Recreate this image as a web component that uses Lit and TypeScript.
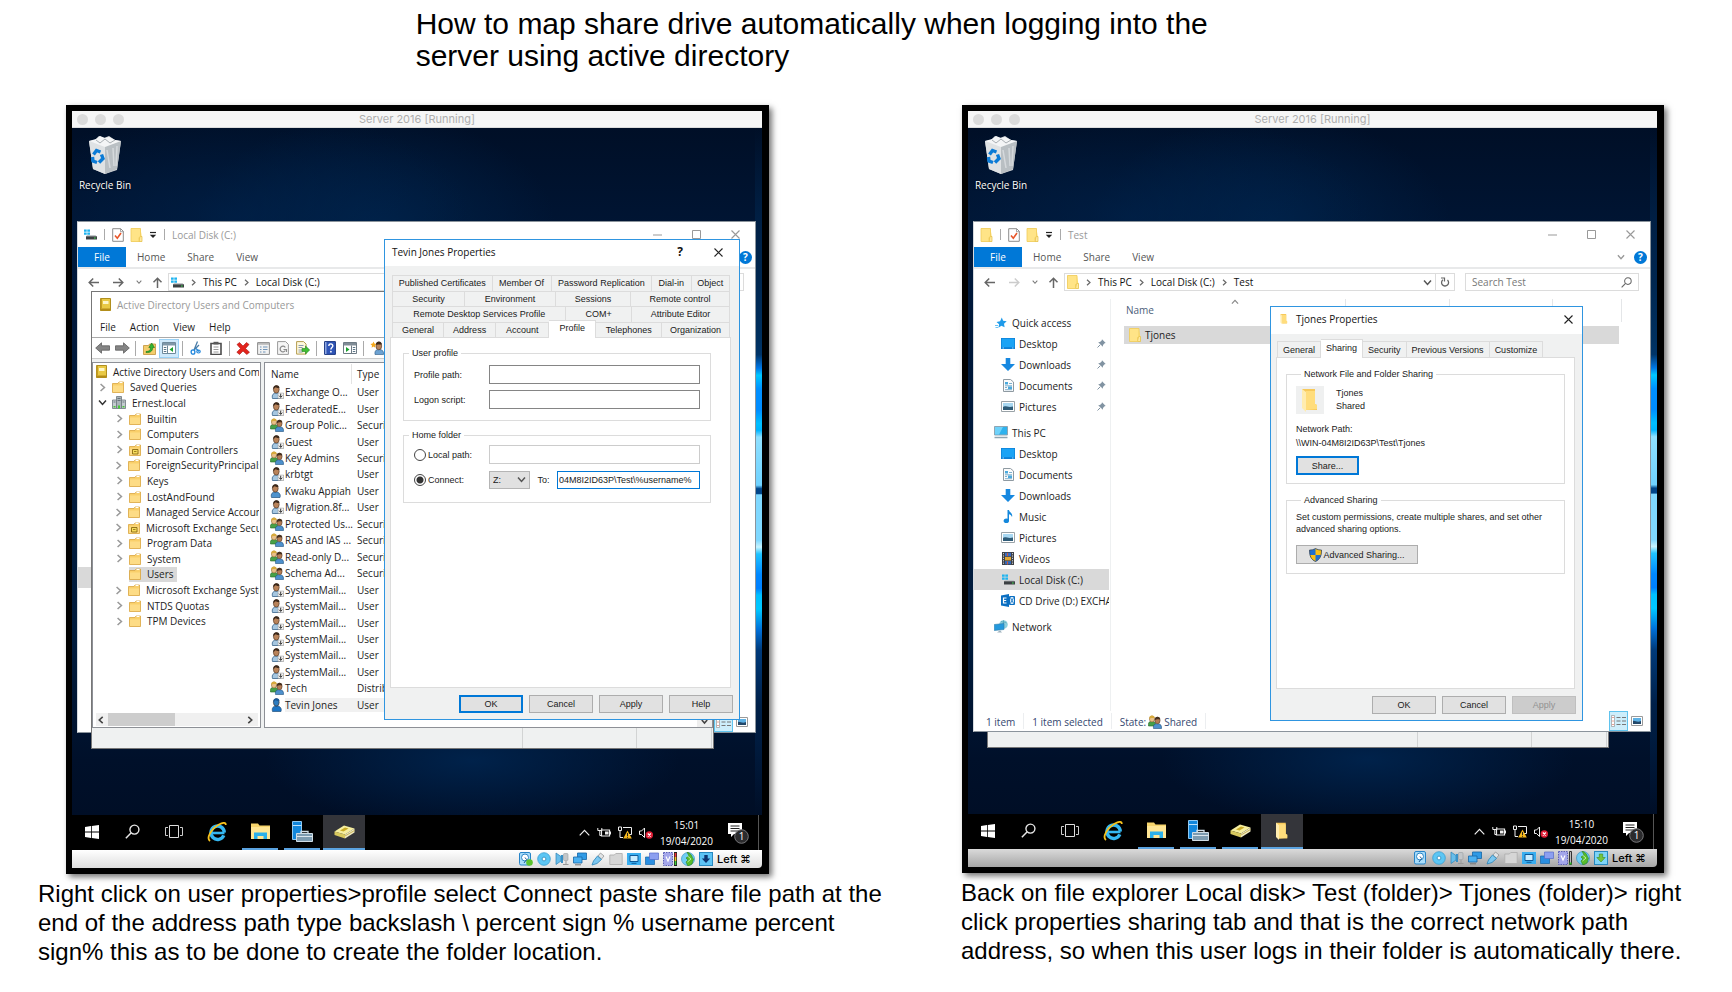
import { LitElement, html, css, nothing } from "lit";
import type { TemplateResult } from "lit";
import { customElement, property } from "lit/decorators.js";
import { classMap } from "lit/directives/class-map.js";

/* ---------- icons ---------- */

const folder = (w = 12, h = 14) => html`<svg width=${w} height=${h} viewBox="0 0 12 14" aria-hidden="true"><path d="M.5.5h9.5l1.5 9v4H.5z" fill="#ffe27a"/><path d="M9.5 8.5h2v5h-3z" fill="#ffe9a0" stroke="#e3bd44" stroke-width=".7"/><path d="M.5.5h9.5v8l-1.500 1v4h-8z" fill="#ffe487" stroke="#f0cc5a" stroke-width=".8"/></svg>`;

const openFolder = (w = 18, h = 24) => html`<svg width=${w} height=${h} viewBox="0 0 18 24" aria-hidden="true"><path d="M1 1h13v15l2 1v5H5z" fill="#f7c95a"/><path d="M5 3h9v13l2 1v4l-11 1z" fill="#ffdd7c"/><path d="M1 1l4 3v20l-4-4z" fill="#ffecaf"/></svg>`;

const treeFolder = (badge = false) => html`<svg width="12" height="12" viewBox="0 0 12 12" aria-hidden="true"><path d="M.5 2.500h5.500l1-1.500h4.500v10.500H.5z" fill="#f9cf6a" stroke="#d9a640" stroke-width=".8"/><path d="M1 4.500h10v6.500H1z" fill="#fddc86"/><path d="M7.500 1.500h3" stroke="#fff" stroke-width="1"/>${badge ? html`<svg x="3" y="4" width="7" height="7"><path d="M.5 1.500h5.500v4.500H.5z" fill="#f6dc5c" stroke="#8a6a10" stroke-width=".9"/><path d="M2 3.500h2.500" stroke="#8a6a10" stroke-width=".8"/></svg>` : nothing}</svg>`;

const drive = html`<svg width="13" height="11" viewBox="0 0 13 11" aria-hidden="true"><path d="M0 .5h2.700v2.300H0zM3.300.5H6v2.300H3.300zM0 3.400h2.700v2.300H0zM3.300 3.400H6v2.300H3.300z" fill="#1fb4f0"/><path d="M3 6h8.500l1.200 1.500H2z" fill="#c3c7ca"/><path d="M2 7.300h11v3.200H2z" fill="#3c4043"/><path d="M10 8.500h1.700v1H10z" fill="#3fdc50"/></svg>`;

const checkDoc = html`<svg width="12" height="14" viewBox="0 0 12 14" aria-hidden="true"><path d="M.7.7h8l2.600 2.600v10H.7z" fill="#fff" stroke="#8d8d8d"/><path d="M8.500.7v3h3" fill="none" stroke="#8d8d8d" stroke-width=".8"/><path d="M3 7.500l2.300 2.700L9 5" fill="none" stroke="#e8562a" stroke-width="1.600"/></svg>`;

const dropMark = html`<svg width="8" height="8" viewBox="0 0 8 8" aria-hidden="true"><path d="M1 1.500h6" stroke="#222" stroke-width="1.200"/><path d="M.8 3.800h6.400L4 7z" fill="#222"/></svg>`;

const arrow = (dir: "left" | "right" | "up", color = "#666") => {
  const d = { left: "M11 5.500H1.200M5.200 1.500l-4 4 4 4", right: "M0 5.500h9.800M5.800 1.500l4 4-4 4", up: "M5.500 11V1.200M1.500 5.200l4-4 4 4" }[dir];
  return html`<svg width="11" height="11" viewBox="0 0 11 11" aria-hidden="true"><path d=${d} fill="none" stroke=${color} stroke-width="1.500"/></svg>`;
};

const chevron = (dir: "left" | "right" | "up" | "down", color = "#777", size = 7, weight = 1.2) => {
  const d = { left: "M5 .8L2 3.500l3 2.700", right: "M2 .8l3 2.700-3 2.700", up: "M.8 5l2.700-3 2.700 3", down: "M.8 2l2.700 3 2.700-3" }[dir];
  return html`<svg width=${size} height=${size} viewBox="0 0 7 7" aria-hidden="true"><path d=${d} fill="none" stroke=${color} stroke-width=${weight}/></svg>`;
};

const closeX = (color = "#222", size = 9) => html`<svg width=${size} height=${size} viewBox="0 0 9 9" aria-hidden="true"><path d="M.5.5l8 8M8.500.5l-8 8" stroke=${color} stroke-width="1.100"/></svg>`;
const minimize = html`<svg width="9" height="9" viewBox="0 0 9 9" aria-hidden="true"><path d="M0 5h9" stroke="#999"/></svg>`;
const maximize = html`<svg width="9" height="9" viewBox="0 0 9 9" aria-hidden="true"><path d="M.5.5h8v8h-8z" fill="none" stroke="#999"/></svg>`;
const refresh = html`<svg width="10" height="11" viewBox="0 0 10 11" aria-hidden="true"><path d="M7.500 3A3.500 3.500 0 1 1 3 2.700" fill="none" stroke="#666" stroke-width="1.300"/><path d="M1 1h3.500v3.500" fill="none" stroke="#666" stroke-width="1.200"/></svg>`;
const magnifier = (color = "#666", size = 11) => html`<svg width=${size} height=${size} viewBox="0 0 14 14" aria-hidden="true"><circle cx="8.800" cy="5.200" r="4.200" fill="none" stroke=${color} stroke-width="1.300"/><path d="M5.800 8.200L.8 13.300" stroke=${color} stroke-width="1.400"/></svg>`;

const book = html`<svg width="11" height="13" viewBox="0 0 11 13" aria-hidden="true"><path d="M.5.500h10v12H.5z" fill="#e9c945" stroke="#a88410" stroke-width=".9"/><path d="M3 3h5.500v3H3z" fill="#fdf6c9"/><path d="M.5 10.500h10v2H.5z" fill="#b48c18"/><path d="M.6 1h1.400v9.500H.6z" fill="#c59e22"/></svg>`;

const domain = html`<svg width="14" height="13" viewBox="0 0 14 13" aria-hidden="true"><path d="M4.500.5h5v12h-5z" fill="#aab4ba" stroke="#6c777d" stroke-width=".8"/><path d="M.5 4h4v8.500h-4zM9.500 4h4v8.500h-4z" fill="#c4ccd0" stroke="#6c777d" stroke-width=".8"/><path d="M5.500 2.500h3M5.500 4.500h3M1.500 6h2M10.500 6h2" stroke="#58646b" stroke-width=".8"/><path d="M6 9.500h2v3H6zM1.500 10h2v1.500h-2zM10.500 10h2v1.500h-2z" fill="#48c838"/></svg>`;

const userIcon = (disabled: boolean, bright = false) => html`<svg width="13" height="14" viewBox="0 0 13 14" aria-hidden="true"><path d="M1.500 13.500c-1-4 1-5.500 4.200-5.500s5.300 2 4.300 5.500z" fill=${bright ? "#1c74c4" : disabled ? "#a5c6e0" : "#4f93cd"} stroke="#24527c" stroke-width=".7"/><ellipse cx="5.300" cy="4.400" rx="2.900" ry="3.700" fill=${bright ? "#2d7cc0" : "#b9835a"} stroke="#4a2f1c" stroke-width=".6"/><path d="M2.300 4.500C2 1.500 3.500.300 5.500.300s3 1.400 2.900 2.700c-2 .3-3-.5-3.600-.7-.8.500-1.600.9-2.500 2.200z" fill=${bright ? "#1a5896" : "#3b281b"}/>${disabled ? html`<svg x="6.500" y="7.500" width="6.500" height="6.500" viewBox="0 0 6.500 6.500"><path d="M.4.400h5.700v5.700H.4z" fill="#f4f4f4" stroke="#888" stroke-width=".6"/><path d="M3.200 1.200v3.500M1.600 3.200l1.600 1.700 1.600-1.700" fill="none" stroke="#222" stroke-width=".9"/></svg>` : nothing}</svg>`;

const groupIcon = html`<svg width="14" height="14" viewBox="0 0 14 14" aria-hidden="true"><path d="M.5 11c-.5-4 1-4.500 3.500-4.500s4 1 4 4.500z" fill="#46a048" stroke="#246427" stroke-width=".6"/><ellipse cx="4" cy="4" rx="2.600" ry="3" fill="#e9c088" stroke="#7a5220" stroke-width=".5"/><path d="M1.300 4C1 1.500 2.300.500 4 .500s2.800 1 2.600 2.500C4 3 3 2.500 1.300 4z" fill="#d7aa3c"/><path d="M5.500 13.500c-.5-4 1.300-4.800 4-4.800s4.300 1.300 4 4.800z" fill="#4d90cc" stroke="#20507c" stroke-width=".6"/><ellipse cx="9.500" cy="5.500" rx="2.600" ry="3.200" fill="#b57d55" stroke="#442a1a" stroke-width=".5"/><path d="M6.800 5.300C6.500 2.800 7.800 1.800 9.500 1.800s2.900 1 2.700 2.600c-2.500 0-3.700-.3-5.400.9z" fill="#46301f"/></svg>`;

const toolIcons: Record<string, TemplateResult> = {
  back: html`<svg width="15" height="12" viewBox="0 0 15 12" aria-hidden="true"><path d="M.7 6L6.500.8v3h8v4.400h-8v3z" fill="#858585" stroke="#5e5e5e" stroke-width=".8"/></svg>`,
  forward: html`<svg width="15" height="12" viewBox="0 0 15 12" aria-hidden="true"><path d="M14.300 6L8.500.8v3h-8v4.400h8v3z" fill="#858585" stroke="#5e5e5e" stroke-width=".8"/></svg>`,
  up: html`<svg width="13" height="13" viewBox="0 0 13 13" aria-hidden="true"><path d="M.5 3.500h5l1-1.500h6v10.500H.5z" fill="#f4cd6b" stroke="#c2933a" stroke-width=".8"/><path d="M3 9.500c3 0 4.500-1 4.500-4H5.800L8.700 1l2.800 4.500H9.700c0 4-3 5.500-6.700 5z" fill="#30b432" stroke="#14751a" stroke-width=".6"/></svg>`,
  pane: html`<svg width="14" height="12" viewBox="0 0 14 12" aria-hidden="true"><path d="M.5.5h13v11H.5z" fill="#fff" stroke="#6f8a9c"/><path d="M1 1h12v2.500H1z" fill="#7f97a8"/><path d="M5.500 3.500v8" stroke="#6f8a9c"/><path d="M1.800 5.500h2.500M1.800 7.500h2.500M1.800 9.500h2.500" stroke="#5b7688"/><path d="M11 5v5L7.500 7.500z" fill="#18a02c"/></svg>`,
  cut: html`<svg width="12" height="14" viewBox="0 0 12 14" aria-hidden="true"><path d="M7.500.5L4 9M9 4L4.500 8.500" stroke="#4a7da8" stroke-width="1.300"/><path d="M6 7.500l3 3" stroke="#2487d8" stroke-width="1.200"/><ellipse cx="3" cy="11" rx="1.900" ry="2.200" fill="none" stroke="#1e85dc" stroke-width="1.300"/><ellipse cx="8.500" cy="10.500" rx="1.700" ry="1.500" fill="none" stroke="#1e85dc" stroke-width="1.200"/></svg>`,
  paste: html`<svg width="12" height="14" viewBox="0 0 12 14" aria-hidden="true"><path d="M1 2.500h10v11H1z" fill="#fff" stroke="#4d4d4d" stroke-width="1.600"/><path d="M3.500.8h5v2.700h-5z" fill="#5b5b5b"/><path d="M3.500 6h5M3.500 8.500h5M3.500 11h5" stroke="#9a9a9a"/></svg>`,
  remove: html`<svg width="14" height="13" viewBox="0 0 14 13" aria-hidden="true"><path d="M1 2.500L3.500.5 7 4l3.500-3.500L13 2.500 9.500 6.500l4 3.700-2.700 2.300L7 9l-3.500 3.500L.8 10.200l3.700-3.700z" fill="#e3241d" stroke="#a81410" stroke-width=".6"/></svg>`,
  props: html`<svg width="13" height="13" viewBox="0 0 13 13" aria-hidden="true"><path d="M.6.6h11.800v11.800H.6z" fill="#f2f2f2" stroke="#8c8c8c"/><path d="M1 1h11v1.800H1z" fill="#b9b9b9"/><path d="M3 5h1.500M6 5h4.500M3 7.500h1.500M6 7.500h4.500M3 10h1.500M6 10h2.500" stroke="#6f94b8"/></svg>`,
  reload: html`<svg width="12" height="14" viewBox="0 0 12 14" aria-hidden="true"><path d="M.6.600h8l2.800 2.800v10H.6z" fill="#f6f6f6" stroke="#9a9a9a"/><path d="M8.300 6.500A2.800 2.800 0 1 0 8.300 9.500" fill="none" stroke="#8a8a8a" stroke-width="1.300"/><path d="M6.500 8.500h3v2.500" fill="none" stroke="#8a8a8a" stroke-width="1.100"/></svg>`,
  exportList: html`<svg width="14" height="14" viewBox="0 0 14 14" aria-hidden="true"><path d="M.6.600h7l2.500 2.500v10H.6z" fill="#fff9dc" stroke="#b49c50"/><path d="M2.500 4.500h5M2.500 6.500h4M2.500 9h4M2.500 11h4" stroke="#6d84a4" stroke-width=".8"/><path d="M6 7.500h3.500V5l4.200 4-4.200 4v-2.500H6z" fill="#41bf33" stroke="#1e8520" stroke-width=".6"/></svg>`,
  help: html`<svg width="12" height="14" viewBox="0 0 12 14" aria-hidden="true"><path d="M.6.600h10.800v12.800H.6z" fill="#2f55b8" stroke="#1a3680"/><path d="M1 1h1.500v12H1z" fill="#8fa8e0"/><path d="M4.800 5c0-3 4.200-2.600 4 0-.100 1.600-1.900 1.600-1.900 3.400" fill="none" stroke="#fff" stroke-width="1.400"/><circle cx="6.900" cy="10.700" r=".9" fill="#fff"/></svg>`,
  action: html`<svg width="14" height="12" viewBox="0 0 14 12" aria-hidden="true"><path d="M.5.5h13v11H.5z" fill="#fff" stroke="#6f7c86"/><path d="M1 1h12v2.500H1z" fill="#808c96"/><path d="M8.500 3.500v8" stroke="#6f7c86"/><path d="M9.800 5.500h2.500M9.800 7.500h2.500M9.800 9.500h2.500" stroke="#5b7688"/><path d="M3 5v5l3.500-2.500z" fill="#18a02c"/></svg>`,
  newUser: html`<svg width="14" height="14" viewBox="0 0 14 14" aria-hidden="true"><path d="M5 13.500c-.5-4 1.200-5 4.200-5s4.800 1.500 4.300 5z" fill="#6ca2d2" stroke="#2a5882" stroke-width=".6"/><ellipse cx="8.800" cy="5" rx="2.900" ry="3.800" fill="#b7835c" stroke="#4a2f1c" stroke-width=".6"/><path d="M5.800 4C6 1.300 7.300.500 9 .500s3 1.500 2.800 3c-2.500.5-3.500-.8-6 .5z" fill="#3b281b"/><path d="M3.500.500l.9 2 2.100.4L5 4.500l.3 2.200-1.800-1.100-1.900 1.100L2 4.500.5 2.900l2.100-.4z" fill="#f5a91e"/></svg>`,
};

const navIcons: Record<string, TemplateResult> = {
  star: html`<svg width="12" height="12" viewBox="0 0 12 12" aria-hidden="true"><path d="M6.800.5l1.300 3.300 3.600.5-2.700 2.400.6 3.600-3.200-1.600-3 2 .7-3.500L1.500 5l3.600-.8z" fill="#1f9bea"/><path d="M0 8.500h3M.5 10.500h2.500" stroke="#6cc3f5"/></svg>`,
  desktop: html`<svg width="14" height="11" viewBox="0 0 14 11" aria-hidden="true"><path d="M0 0h14v11H0z" fill="#0c7fd6"/><path d="M.7.700h12.600v8.500H.7z" fill="#1ba3f5"/><path d="M1.500 10h1.500M11 10h1.500" stroke="#bfe6ff" stroke-width=".8"/></svg>`,
  downloads: html`<svg width="14" height="13" viewBox="0 0 14 13" aria-hidden="true"><path d="M4.700 0h4.600v6H14l-7 7-7-7h4.700z" fill="#1688e0"/></svg>`,
  documents: html`<svg width="11" height="13" viewBox="0 0 11 13" aria-hidden="true"><path d="M.5.5h7L10.500 3v9.500H.5z" fill="#fbfbfb" stroke="#8f9aa2"/><path d="M2 3h3v2.500H2zM5 7.500h4v2.500H5z" fill="#4aa9dd"/><path d="M6 4.500h3M2 6.800h7M2 8.500h2M2 10.700h7" stroke="#5e9cc0" stroke-width=".8"/></svg>`,
  pictures: html`<svg width="14" height="11" viewBox="0 0 14 11" aria-hidden="true"><path d="M.5.5h13v10H.5z" fill="#fff" stroke="#9aa3a8"/><path d="M2 2h10v7H2z" fill="#a9d8f2"/><path d="M2 6c2-2 5 1 10-.5V9H2z" fill="#2f5c78"/></svg>`,
  pc: html`<svg width="14" height="13" viewBox="0 0 14 13" aria-hidden="true"><path d="M.5.5h13v8.500H.5z" fill="#2eb2ee" stroke="#8fa5b2"/><path d="M1 1h8L5 8.500H1z" fill="#6fd2fa"/><path d="M.5 11.500h13" stroke="#8fa5b2" stroke-width="1.500"/></svg>`,
  music: html`<svg width="11" height="13" viewBox="0 0 11 13" aria-hidden="true"><path d="M4.500 0h1.500c.3 2.500 4.200 3 3 7-.8-2-1.800-2.500-3-2.800V10.500A2.700 2.300 0 1 1 4.500 8.800z" fill="#1488dc"/></svg>`,
  videos: html`<svg width="12" height="13" viewBox="0 0 12 13" aria-hidden="true"><path d="M0 0h12v13H0z" fill="#3e4145"/><path d="M3 .8h6v3.500H3z" fill="#3a6cc4"/><path d="M3 4.900h6v3.500H3z" fill="#e0a733"/><path d="M3 9h6v3.300H3z" fill="#3468b8"/><path d="M5 1h1v3H5zM5 9.500h1v3H5z" fill="#d05c34"/><path d="M1.500 1v11.500M10.500 1v11.500" stroke="#c9ccd0" stroke-width="1" stroke-dasharray="1.200 1.200"/></svg>`,
  drive,
  exchange: html`<svg width="14" height="13" viewBox="0 0 14 13" aria-hidden="true"><path d="M0 1.500L8 0v13L0 11.500z" fill="#0b6fc2"/><path d="M5.500 4h-3v5h3M2.500 6.500h2.700" fill="none" stroke="#fff" stroke-width="1.200"/><path d="M8.500 2.500h5v8h-5z" fill="#d6e9f8" stroke="#0b6fc2"/><path d="M9 3l2 3.500L9 10M13 3l-2 3.500 2 3.500" fill="none" stroke="#0b6fc2" stroke-width=".8"/></svg>`,
  network: html`<svg width="14" height="13" viewBox="0 0 14 13" aria-hidden="true"><circle cx="9.500" cy="4.500" r="4.300" fill="#8fd0de"/><path d="M7 1.500c2 1 4 0 5.500 1.500M9.500.200v8" stroke="#4b9fb5" stroke-width=".7" fill="none"/><path d="M.3 4.500L10 3.500v6L.3 10.500z" fill="#2499dd" stroke="#2f7eaa" stroke-width=".6"/><path d="M3 12.500h5L6 10.300z" fill="#9fb2bd"/></svg>`,
};

const pin = html`<svg width="9" height="9" viewBox="0 0 9 9" aria-hidden="true"><path d="M5 .3L8.700 4 7.600 4.300 6 6l-.2 1.800L1.200 3.200 3 3l1.700-1.600z" fill="#8193a2"/><path d="M3.200 5.800L.5 8.500" stroke="#8193a2"/></svg>`;

const detailsView = html`<svg width="15" height="12" viewBox="0 0 15 12" aria-hidden="true"><path d="M.5.5h3v11h-3z" fill="#fff" stroke="#999" stroke-width=".7"/><path d="M1.500 2.500h1M1.500 6h1M1.500 9.500h1" stroke="#d0452f"/><path d="M5.500 2.500h4M11 2.500h4M5.500 6h4M11 6h4M5.500 9.500h4M11 9.500h4" stroke="#777"/></svg>`;
const thumbView = html`<svg width="12" height="10" viewBox="0 0 12 10" aria-hidden="true"><path d="M.5.5h11v9H.5z" fill="#fff" stroke="#9a9a9a"/><path d="M2 2h8v6H2z" fill="#5eb1e4"/><path d="M2 5c2-1 4 2 8 0v3H2z" fill="#23486a"/></svg>`;

const shield = html`<svg width="13" height="14" viewBox="0 0 13 14" aria-hidden="true"><path d="M6.500.5C8.500 1.700 10.500 2 12.500 2c0 6-1.500 9.500-6 11.500C2 11.500.5 8 .5 2 2.500 2 4.500 1.700 6.500.5z" fill="#1f6fd0"/><path d="M6.500.5C8.500 1.700 10.500 2 12.500 2c0 2 0 3.500-.4 5H6.500zM6.500 7v6.500C3 12 1.400 9.800.9 7z" fill="#fbbf14"/><path d="M6.500.5C8.500 1.700 10.500 2 12.500 2c0 6-1.500 9.500-6 11.500C2 11.500.5 8 .5 2 2.500 2 4.500 1.700 6.500.5z" fill="none" stroke="#3c4a5c" stroke-width=".8"/></svg>`;

const recycleBin = html`<svg width="34" height="38" viewBox="0 0 34 38" aria-hidden="true"><path d="M1 5l6-1 4-4 5 2 5-2 6 4 6 1-4 29-12 4L5 33z" fill="#cfd3d6"/><path d="M1 5l16 5v28L5 33z" fill="#dfe2e4"/><path d="M17 10l16-5-4 28-12 5z" fill="#b9bfc3"/><path d="M1 5l7-2 4-3 5 2 4-1 6 3 6 1-16 6z" fill="#f4f5f6"/><path d="M8 4l4 3 5-4 5 4 5-3" fill="none" stroke="#a9afb3"/><path d="M19 14l3 18M25 12l1 18M29 10l-1 20" stroke="#d5d9dc" stroke-width="1.500"/><g fill="none" stroke="#0b7bd6" stroke-width="3.400"><path d="M5.500 18.500l3-4 4 1.500"/><path d="M13.500 18.500l1.500 4-4 4"/><path d="M9 26.500l-4-1.500-.5-4"/></g></svg>`;

const taskIcons: Record<string, TemplateResult> = {
  start: html`<svg width="14" height="14" viewBox="0 0 14 14" aria-hidden="true"><path d="M0 2l6-1v5.600H0zM6.800.9L14 0v6.600H6.800zM0 7.400h6V13l-6-.9zM6.800 7.400H14V14l-7.200-1z" fill="#fff"/></svg>`,
  search: magnifier("#e8e8e8", 15),
  view: html`<svg width="18" height="13" viewBox="0 0 18 13" aria-hidden="true"><path d="M4.500.5h9v12h-9z" fill="none" stroke="#ddd"/><path d="M3 2.500H.5v8h2.500M15 2.500h2.500v8H15" fill="none" stroke="#ccc"/></svg>`,
  ie: html`<svg width="20" height="20" viewBox="0 0 20 20" aria-hidden="true"><path d="M4.500 11h13" stroke="#35b8f2" stroke-width="2.600"/><path d="M16.800 13.300A6.700 6.700 0 1 1 17.300 10.500" fill="none" stroke="#35b8f2" stroke-width="3.400"/><path d="M3 19C-1 16 4 7 12 2.500 16 .300 19 .200 18.700 3" fill="none" stroke="#f7c21c" stroke-width="1.800"/></svg>`,
  explorer: html`<svg width="19" height="17" viewBox="0 0 19 17" aria-hidden="true"><path d="M0 .5h7l1.500 2H19V16H0z" fill="#f7d56c"/><path d="M0 4h19v12H0z" fill="#ffe695"/><path d="M3 16v-6.500h13V16h-3.500v-3h-6v3z" fill="#2bb0ea"/></svg>`,
  server: html`<svg width="21" height="21" viewBox="0 0 21 21" aria-hidden="true"><path d="M.5.5h9v18h-9z" fill="#1287dc" stroke="#8fc9f2"/><path d="M1 4.500h8.500" stroke="#bfe2fa"/><path d="M4.500 12.500h16v8h-16z" fill="#7d9cb1" stroke="#cfdde6"/><path d="M9 12.500v-2h7v2" fill="none" stroke="#cfdde6" stroke-width="1.300"/><path d="M4.500 15.500h16" stroke="#dbe6ee"/></svg>`,
  directory: html`<svg width="21" height="14" viewBox="0 0 21 14" aria-hidden="true"><path d="M.5 6.500L10 .5l10.500 3-9.500 6z" fill="#f6efa0"/><path d="M.5 6.500l10.500 3v4L.5 10z" fill="#d8c95e"/><path d="M11 9.500l9.500-6v4L11 13.500z" fill="#efe9c0"/><path d="M6 5.500l5-3 3.500 1-5 3z" fill="#c9ab26"/><path d="M11 11l9.500-5.500" stroke="#b39a2a" stroke-width=".7"/></svg>`,
  folder: openFolder(14, 18),
};

const trayIcons = html`
  <svg width="11" height="7" viewBox="0 0 11 7" aria-hidden="true"><path d="M.7 6.300l4.800-5 4.800 5" fill="none" stroke="#eee" stroke-width="1.200"/></svg>
  <svg width="14" height="11" viewBox="0 0 14 11" aria-hidden="true"><path d="M4.500 3h8v6h-8z" fill="none" stroke="#eee" stroke-width="1.200"/><path d="M12.500 4.500H14v3h-1.500zM8 4.500h3.500v3H8z" fill="#eee"/><path d="M.8 1v2.500h4V1M2.800 3.500v5h2" fill="none" stroke="#eee"/></svg>
  <svg width="14" height="13" viewBox="0 0 14 13" aria-hidden="true"><path d="M.5 1h3v3.500h-3zM5 1.500h8.500v7H8M2 4.500v7h3" fill="none" stroke="#eee"/><path d="M9.500 4.500l4.300 8H5.200z" fill="#f5b81c"/><path d="M9.500 7v3M9.500 10.800v1" stroke="#222"/></svg>
  <svg width="14" height="12" viewBox="0 0 14 12" aria-hidden="true"><path d="M.5 4h2l3-3v9.500l-3-3h-2z" fill="none" stroke="#eee"/><circle cx="10.300" cy="8" r="3.700" fill="#e01e36"/><path d="M8.800 6.500l3 3M11.800 6.500l-3 3" stroke="#fff" stroke-width="1.100"/></svg>`;

const noteIcon = html`<svg width="21" height="22" viewBox="0 0 21 22" aria-hidden="true"><path d="M0 1h14v11H6l-3 3v-3H0z" fill="#fff"/><path d="M2.500 4h9M2.500 6.500h9M2.500 9h9" stroke="#222"/><circle cx="13.500" cy="14.500" r="6.800" fill="#2b2b2d" stroke="#77777a"/></svg>`;

const vmIcon = (name: string) => {
  const body: Record<string, TemplateResult> = {
    disk: html`<svg width="14" height="14" viewBox="0 0 14 14"><rect x=".5" y=".5" width="11" height="12.500" rx="1.500" fill="#a8dcfa" stroke="#2784c8"/><circle cx="6" cy="5.500" r="3.500" fill="#fff" stroke="#2a86c6"/><path d="M6 5.500l1.500 2L5 11" stroke="#1f5c94" fill="none"/></svg>`,
    diskBusy: html`<svg width="14" height="14" viewBox="0 0 14 14"><rect x=".5" y=".5" width="11" height="12.500" rx="1.500" fill="#a8dcfa" stroke="#2784c8"/><circle cx="6" cy="5.500" r="3.500" fill="#fff" stroke="#2a86c6"/><path d="M6 5.500l1.500 2L5 11" stroke="#1f5c94" fill="none"/><circle cx="10.500" cy="10.500" r="3.300" fill="#5bc22e"/></svg>`,
    cd: html`<svg width="14" height="14" viewBox="0 0 14 14"><circle cx="7" cy="7" r="6.300" fill="#5cc6f4" stroke="#3a9ed0" stroke-width=".8"/><circle cx="7" cy="7" r="1.900" fill="#fff" stroke="#2a86b8" stroke-width=".8"/></svg>`,
    audio: html`<svg width="14" height="14" viewBox="0 0 14 14"><path d="M1 1l5 3.500v4.500L1 12.500z" fill="#67bdea" stroke="#2d83b5" stroke-width=".7"/><path d="M6 3h2v8H6z" fill="#3990c6"/><rect x="8.500" y="1.500" width="4.500" height="7" rx="1" fill="#c2c6c9" stroke="#989da1" stroke-width=".6"/><path d="M8 12.500h5.500M11 9v3" stroke="#999"/></svg>`,
    net: html`<svg width="14" height="14" viewBox="0 0 14 14"><path d="M4.500 1h9v6.500h-9z" fill="#2f9ae6" stroke="#1466a6" stroke-width=".8"/><path d="M.5 5h8.500v6H.5z" fill="#4bb1f2" stroke="#1466a6" stroke-width=".8"/><path d="M2 12.800h6" stroke="#777"/></svg>`,
    usb: html`<svg width="14" height="14" viewBox="0 0 14 14"><path d="M9.500 1l3.500 3-2.500 3L7 4z" fill="#e1e4e6" stroke="#888" stroke-width=".7"/><path d="M6.500 4l4 3.500L6 11.500l-5 1.500L2.500 9z" fill="#7cc7f0" stroke="#2b84b8" stroke-width=".8"/></svg>`,
    share: html`<svg width="14" height="14" viewBox="0 0 14 14"><path d="M.8 3h4.500l1.500-1.500h6.400V12.500H.8z" fill="#d6d6d6" stroke="#b0b0b0" stroke-width=".9"/></svg>`,
    display: html`<svg width="14" height="14" viewBox="0 0 14 14"><rect x="0" y="1" width="14" height="12" fill="#39aef0"/><path d="M3 3.500h8v6H3z" fill="#c9ecff" stroke="#0e5a9a"/><path d="M4.500 11.300h5" stroke="#0e5a9a"/></svg>`,
    record: html`<svg width="14" height="14" viewBox="0 0 14 14"><path d="M.5 5h9v7.500h-9z" fill="#2a8ee0" stroke="#1565a8" stroke-width=".7"/><path d="M4.500 1h9v6.500h-9z" fill="#8c9ff0" stroke="#566ac8" stroke-width=".7"/></svg>`,
    cpuHigh: html`<svg width="14" height="14" viewBox="0 0 14 14"><rect x=".5" y=".5" width="9" height="13" fill="#a3a6ea" stroke="#5b60b8" stroke-dasharray="1.500 1"/><path d="M3 4.500l2 4.500 2-4.500" fill="none" stroke="#fff" stroke-width="1.200"/><path d="M11 0h3v14h-3z" fill="#222"/><path d="M11.700 1h1.600v4h-1.600z" fill="#e33"/><path d="M11.700 5h1.600v4h-1.600z" fill="#f4c422"/><path d="M11.700 9h1.600v4h-1.600z" fill="#3fc93c"/></svg>`,
    cpuLow: html`<svg width="14" height="14" viewBox="0 0 14 14"><rect x=".5" y=".5" width="9" height="13" fill="#a3a6ea" stroke="#5b60b8" stroke-dasharray="1.500 1"/><path d="M3 4.500l2 4.500 2-4.500" fill="none" stroke="#fff" stroke-width="1.200"/><path d="M11.500.5h2v13h-2z" fill="#bbb" stroke="#333"/><path d="M11.500 11.500h2v2h-2z" fill="#2fc52c"/></svg>`,
    mouse: html`<svg width="14" height="14" viewBox="0 0 14 14"><circle cx="7" cy="7" r="6.500" fill="#6fcdf5" stroke="#3793c2" stroke-width=".7"/><path d="M6 0c3 1 5 3 5.500 6l1 1-1.500 5-4 2-2-4 2-2-2-2 3-2z" fill="#57bd2b" stroke="#2f7f1a" stroke-width=".6"/><path d="M6.500 4l3.500 3-3.500 3" fill="none" stroke="#d7f5c0" stroke-width=".8"/></svg>`,
    keyDark: html`<svg width="14" height="14" viewBox="0 0 14 14"><rect x=".5" y=".5" width="13" height="13" fill="#5cc3f5" stroke="#2788c0"/><path d="M5.300 3h3.400v3.500h2.500L7 11 2.800 6.500h2.500z" fill="#0d3470"/></svg>`,
    keyGreen: html`<svg width="14" height="14" viewBox="0 0 14 14"><rect x=".5" y=".5" width="13" height="13" fill="#7fd4f7" stroke="#2788c0"/><path d="M5.300 3h3.400v3.500h2.500L7 11 2.800 6.500h2.500z" fill="#76c43c" stroke="#3c8c1e" stroke-width=".6"/></svg>`,
  };
  return body[name];
};

/* ---------- shared styles ---------- */

const base = css`
  *, *::before, *::after { box-sizing: border-box; }
  svg { display: block; flex: none; }
  button, input, select { font: inherit; color: inherit; margin: 0; }
  button { display: inline-flex; align-items: center; justify-content: center; padding: 0; border: 0; background: none; }
  ul, p, h1, h2 { margin: 0; padding: 0; list-style: none; font-weight: 400; font-size: inherit; }
  .segoe { font: 10px/14px "Open Sans", "Noto Sans", sans-serif; }
`;

/* ---------- virtual machine frame ---------- */

@customElement("vm-frame")
class VmFrame extends LitElement {
  @property() time = "";
  @property() active = "directory";
  @property({ type: Boolean }) inactive = false;

  static styles = [base, css`
    :host { display: block; border: 6px solid #000; border-right-width: 7px; background: #000; box-shadow: 3px 3px 6px rgb(0 0 0 / 55%); }
    .title { position: relative; display: flex; align-items: center; justify-content: center; height: 17px; background: #f6f6f6; color: #adadad; font: 11px/17px Inter, "Liberation Sans", sans-serif; border-bottom: 1px solid #ddd; }
    .lights { position: absolute; left: 5px; top: 3px; display: flex; gap: 7px; }
    .lights i { width: 11px; height: 11px; border-radius: 50%; background: #dbdbdb; }
    .desktop { position: relative; aspect-ratio: 690 / 687; background:
        linear-gradient(rgb(0 18 44 / 0%) 0%, #00264f 22%, #00305f 31%, #003468 33%, #0079e8 35%, #00c8ff 36%, #0090ff 38%, #008cff 41%, #00bfff 43%, #00b4ff 44%, #8fe0ff 45%, #6fd2ff 52%, #004488 52.5%, #004488 53.2%, #7fd8ff 53.4%, #7fd8ff 60%, #c8f4ff 61%, #20c4ff 62%, #0088ff 65%, #0080ff 67%, #00c0ff 68%, #00c8ff 70%, #0070d8 73%, #003a7a 76%, #002048 84%, rgb(0 24 56 / 0%) 100%) right / 7px 100% no-repeat,
        radial-gradient(ellipse 34% 16% at 24% 13%, rgb(0 37 80 / 55%) 0%, rgb(0 37 80 / 0%) 100%),
        radial-gradient(ellipse 30% 10% at 58% 92%, rgb(0 36 78 / 90%) 0%, rgb(0 36 78 / 0%) 100%),
        radial-gradient(ellipse 26% 16% at 44% 14%, rgb(0 34 73 / 90%) 0%, rgb(0 34 73 / 0%) 100%),
        linear-gradient(#000f27, #00183a 22%, #001b3c 75%, #00102a 92%, #000e26); }
    .bin { position: absolute; left: 4px; top: 8px; width: 58px; display: flex; flex-direction: column; align-items: center; gap: 4px; color: #fff; text-shadow: 0 0 2px #000; white-space: nowrap; }
    .taskbar { display: flex; height: 35px; background: #000; color: #fff; }
    .task { width: 42px; border-bottom: 2px solid transparent; }
    .task.first { width: 39px; }
    .task.last { width: 44px; }
    .task.open { border-bottom-color: #5ba3e0; }
    .task.open:not(.active) { width: 36px; margin: 0 3px; }
    .task.active { background: #34353a; }
    .tray { margin-left: auto; display: flex; align-items: center; gap: 7px; }
    .clock { text-align: center; line-height: 16px; padding-top: 1px; }
    .note { position: relative; margin: 0 9px 0 8px; }
    .note b { position: absolute; right: 0; bottom: 1px; width: 15px; text-align: center; font-weight: 400; line-height: 14px; }
    .peek { width: 1px; height: 35px; background: #555; margin-right: 3px; margin-left: -7px; }
    .vmbar { display: flex; align-items: center; justify-content: flex-end; gap: 4px; height: 18px; padding-right: 11px; background: linear-gradient(#fff, #dedede); border-bottom-right-radius: 4px; color: #000; font: 11px/18px Inter, "Liberation Sans", "DejaVu Sans", sans-serif; font-weight: 500; }
    .vmbar.inactive { background: linear-gradient(#dadada, #a6a6a6); }
  `];

  render() {
    const pinned = ["start", "search", "view", "ie"];
    const open = this.active === "folder" ? ["explorer", "server", "directory", "folder"] : ["explorer", "server", "directory"];
    const strip = [this.inactive ? "disk" : "diskBusy", "cd", "audio", "net", "usb", "share", "display", "record", this.inactive ? "cpuLow" : "cpuHigh", "mouse", this.inactive ? "keyGreen" : "keyDark"];
    return html`
      <div class="title"><span class="lights"><i></i><i></i><i></i></span>Server 2016 [Running]</div>
      <div class="desktop">
        <div class="bin segoe">${recycleBin}<span>Recycle Bin</span></div>
        <slot></slot>
      </div>
      <div class="taskbar segoe">
        ${pinned.map((t, i) => html`<button class=${classMap({ task: true, first: i === 0, last: i === 3 })} aria-label=${t}>${taskIcons[t]}</button>`)}
        ${open.map((t) => html`<button class=${classMap({ task: true, open: true, active: t === this.active })} aria-label=${t}>${taskIcons[t]}</button>`)}
        <div class="tray">${trayIcons}
          <div class="clock">${this.time}<br>19/04/2020</div>
          <button class="note" aria-label="Notifications">${noteIcon}<b>1</b></button>
          <span class="peek"></span>
        </div>
      </div>
      <div class=${classMap({ vmbar: true, inactive: this.inactive })}>${strip.map(vmIcon)}<span>Left ⌘</span></div>`;
  }
}

/* ---------- file explorer ---------- */

interface NavItem { icon: string; label: string; level: number; pinned?: boolean; selected?: boolean; gap?: boolean }

const navItems: NavItem[] = [
  { icon: "star", label: "Quick access", level: 0 },
  { icon: "desktop", label: "Desktop", level: 1, pinned: true },
  { icon: "downloads", label: "Downloads", level: 1, pinned: true },
  { icon: "documents", label: "Documents", level: 1, pinned: true },
  { icon: "pictures", label: "Pictures", level: 1, pinned: true },
  { icon: "pc", label: "This PC", level: 0, gap: true },
  { icon: "desktop", label: "Desktop", level: 1 },
  { icon: "documents", label: "Documents", level: 1 },
  { icon: "downloads", label: "Downloads", level: 1 },
  { icon: "music", label: "Music", level: 1 },
  { icon: "pictures", label: "Pictures", level: 1 },
  { icon: "videos", label: "Videos", level: 1 },
  { icon: "drive", label: "Local Disk (C:)", level: 1, selected: true },
  { icon: "exchange", label: "CD Drive (D:) EXCHANGE", level: 1 },
  { icon: "network", label: "Network", level: 0, gap: true },
];

@customElement("explorer-window")
class ExplorerWindow extends LitElement {
  @property({ attribute: false }) path: string[] = [];
  @property({ type: Boolean }) covered = false;

  static styles = [base, css`
    :host { display: flex; flex-direction: column; background: #fff; color: #222; border: 1px solid #8b949c; border-left-color: #d6dade; font: 10px/14px "Open Sans", "Noto Sans", sans-serif; white-space: nowrap; }
    .title { display: flex; align-items: center; gap: 6px; height: 25px; padding: 0 15px 0 6px; color: #999; }
    .sep { width: 1px; height: 11px; margin: 0 1px; background: #aaa; }
    .controls { display: flex; gap: 30px; margin-left: auto; }
    .tabs { display: flex; align-items: center; height: 22px; border-bottom: 2px solid #e8e9ea; color: #555; }
    .tab { height: 20px; padding: 0 11px; }
    .file { width: 48px; background: #0078d7; color: #fff; }
    .tools { display: flex; align-items: center; gap: 9px; margin-left: auto; padding-right: 3px; }
    .help { width: 13px; height: 13px; border-radius: 50%; background: #0078d7; color: #fff; font-weight: 700; }
    .address { display: flex; align-items: center; padding: 4px 11px 5px 3px; }
    .nav { display: grid; grid-template-columns: 24px 26px 16px 21px; }
    .box { display: flex; align-items: center; height: 18px; border: 1px solid #dcdcdc; color: #111; }
    .crumbs { flex: 1; gap: 6px; padding: 0 3px 0 2px; }
    .crumbs .end { margin-left: auto; }
    .reload { width: 19px; border-left: 0; justify-content: center; }
    .search { width: 174px; margin-left: 10px; padding: 0 6px; }
    .search input { flex: 1; min-width: 0; padding: 0; border: 0; outline: 0; background: none; }
    .search input::placeholder { color: #777; opacity: 1; }
    .panes { flex: 1; display: flex; min-height: 0; padding-top: 3px; }
    .side { flex: none; width: 137px; padding-top: 13px; border-right: 1px solid #eef0f1; overflow: hidden; }
    .side li { display: flex; align-items: center; gap: 4px; height: 21px; margin-right: 1px; overflow: hidden; padding-left: 20px; }
    .side li.gap { margin-top: 5px; }
    .side li.selected { background: #d9d9d9; }
    .side .pin { margin-left: auto; padding-right: 3px; }
    .glyph { width: 14px; display: flex; justify-content: center; }
    .side li.level1 { padding-left: 27px; }
    .files { flex: 1; display: flex; flex-direction: column; }
    .head { display: grid; grid-template-columns: 235px 104px 103px 69px; height: 23px; color: #4c607a; padding-left: 0; }
    .head span { border-right: 1px solid #e4e6e8; padding: 4px 0 0 15px; position: relative; }
    .head .caret { position: absolute; left: 120px; top: -1px; }
    .entry { display: flex; align-items: center; gap: 4px; height: 18px; margin: 4px 31px 0 13px; padding-left: 5px; background: #d9d9d9; }
    .status { display: flex; align-items: center; height: 20px; padding-left: 12px; color: #34466f; }
    .status span { padding: 2px 8px 0 0; margin-right: 8px; border-right: 1px solid #eceef0; display: flex; align-items: center; gap: 2px; }
    .views { margin-left: auto; display: flex; align-items: center; gap: 3px; padding-right: 7px; }
    .views .on { width: 19px; height: 20px; border: 1px solid #5fc3ee; background: #cdeefb; }
  `];

  render() {
    const current = this.path[this.path.length - 1];
    const place = current.startsWith("Local") ? drive : folder();
    const items = this.covered ? [] : navItems;
    return html`
      <div class="title">${current.startsWith("Local") ? drive : folder(13, 14)}<i class="sep"></i>${checkDoc}${folder(13, 14)}${dropMark}<i class="sep"></i>${current}
        <span class="controls"><button aria-label="Minimize">${minimize}</button><button aria-label="Maximize">${maximize}</button><button aria-label="Close">${closeX("#999")}</button></span>
      </div>
      <div class="tabs"><button class="tab file">File</button><button class="tab">Home</button><button class="tab">Share</button><button class="tab">View</button>
        <span class="tools">${this.covered ? nothing : chevron("down", "#999", 8)}<button class="help" aria-label="Help">?</button></span>
      </div>
      <div class="address">
        <span class="nav"><button aria-label="Back">${arrow("left")}</button><button aria-label="Forward">${arrow("right", this.covered ? "#666" : "#ccc")}</button><button aria-label="Recent">${chevron("down", "#777", 6)}</button><button aria-label="Up">${arrow("up")}</button></span>
        <div class="box crumbs">${place}${this.path.map((p) => html`${chevron("right", "#666")}<span>${p}</span>`)}<span class="end">${chevron("down", "#555", 9)}</span></div>
        <button class="box reload" aria-label="Refresh">${refresh}</button>
        <label class="box search"><input type="search" aria-label="Search" placeholder=${this.covered ? "" : "Search " + current}>${magnifier()}</label>
      </div>
      <div class="panes">
        <ul class="side">
          ${items.map((n) => html`<li class=${classMap({ gap: !!n.gap, selected: !!n.selected, level1: n.level === 1 })}><span class="glyph">${navIcons[n.icon]}</span>${n.label}${n.pinned ? html`<span class="pin">${pin}</span>` : nothing}</li>`)}
          <slot name="side"></slot>
        </ul>
        ${this.covered ? nothing : html`<div class="files">
          <div class="head"><span>Name<i class="caret">${chevron("up", "#888", 8, 1)}</i></span><span></span><span></span><span></span></div>
          <div class="entry">${folder()}Tjones</div>
        </div>`}
      </div>
      <div class="status">${this.covered ? nothing : html`<span>1 item</span><span>1 item selected</span><span>State:${groupIcon} Shared</span>`}
        <div class="views"><button class="on" aria-label="Details">${detailsView}</button><button aria-label="Thumbnails">${thumbView}</button></div>
      </div>`;
  }
}

/* ---------- directory console ---------- */

const treeRows: [string, number, string][] = [
  ["Saved Queries", 1, "folder"], ["Ernest.local", 1, "domain"],
  ["Builtin", 2, "folder"], ["Computers", 2, "folder"], ["Domain Controllers", 2, "unit"], ["ForeignSecurityPrincipals", 2, "folder"],
  ["Keys", 2, "folder"], ["LostAndFound", 2, "folder"], ["Managed Service Accounts", 2, "folder"], ["Microsoft Exchange Security", 2, "unit"],
  ["Program Data", 2, "folder"], ["System", 2, "folder"], ["Users", 2, "selected"], ["Microsoft Exchange System", 2, "folder"],
  ["NTDS Quotas", 2, "folder"], ["TPM Devices", 2, "folder"],
];

const accounts: [string, string, string][] = [
  ["Exchange O...", "User", "off"], ["FederatedE...", "User", "off"], ["Group Polic...", "Security", "group"], ["Guest", "User", "off"],
  ["Key Admins", "Security", "group"], ["krbtgt", "User", "off"], ["Kwaku Appiah", "User", "on"], ["Migration.8f...", "User", "off"],
  ["Protected Us...", "Security", "group"], ["RAS and IAS ...", "Security", "group"], ["Read-only D...", "Security", "group"], ["Schema Ad...", "Security", "group"],
  ["SystemMail...", "User", "off"], ["SystemMail...", "User", "off"], ["SystemMail...", "User", "off"], ["SystemMail...", "User", "off"],
  ["SystemMail...", "User", "off"], ["SystemMail...", "User", "off"], ["Tech", "Distribution", "group"], ["Tevin Jones", "User", "selected"],
];

@customElement("directory-window")
class DirectoryWindow extends LitElement {
  @property({ type: Boolean }) covered = false;

  static styles = [base, css`
    :host { display: flex; flex-direction: column; background: #fff; color: #1c1c1c; border: 1px solid #777; font: 10px/14px "Open Sans", "Noto Sans", sans-serif; white-space: nowrap; }
    .title { display: flex; align-items: center; gap: 6px; height: 25px; padding-left: 8px; color: #999; }
    .menu { display: flex; gap: 14px; height: 21px; padding: 3px 0 0 8px; border-bottom: 1px solid #aaa; }
    .toolbar { display: flex; align-items: center; height: 21px; border-bottom: 1px solid #ccc; }
    .toolbar button { width: 20px; height: 19px; }
    .toolbar .on { background: #cfe9fb; border: 1px solid #9ad1f5; }
    .toolbar i { width: 1px; height: 15px; margin: 0 3px; background: #aaa; }
    .panes { flex: 1; display: grid; grid-template-columns: 169px 1fr; gap: 3px; padding-top: 3px; background: #eff1f1; min-height: 0; }
    .pane { background: #fff; border: 1px solid #8d9096; overflow: hidden; min-width: 0; }
    .tree { display: flex; flex-direction: column; padding: 1px 1px 1px 3px; }
    .tree ul { display: grid; grid-auto-rows: 1fr; height: 265px; }
    .tree li { display: flex; align-items: center; gap: 5px; overflow: hidden; }
    .tree .l1 { padding-left: 1px; }
    .tree .l2 { padding-left: 18px; }
    .tree .chev { width: 10px; display: flex; justify-content: center; }
    .node { display: flex; align-items: center; gap: 6px; height: 16px; padding-right: 3px; }
    .node.selected { background: #d9d9d9; }
    .scroll { margin-top: auto; display: flex; align-items: center; height: 13px; margin-right: 1px; background: #f0f0f0; padding: 0 4px 0 1px; justify-content: space-between; }
    .scroll b { width: 67px; height: 13px; background: #cdcdcd; margin: 0 auto 0 3px; }
    .list { display: flex; flex-direction: column; }
    table { display: block; border-spacing: 0; }
    thead { display: block; }
    tr { display: grid; grid-template-columns: 86px 1fr; align-items: center; }
    thead tr { height: 21px; }
    th { text-align: left; font-weight: 400; padding: 0 0 0 6px; }
    th + th { border-left: 1px solid #e3e3e3; line-height: 20px; padding-left: 5px; }
    tbody { display: grid; grid-auto-rows: 1fr; height: 329px; }
    td { display: flex; align-items: center; gap: 1px; padding: 0 0 0 5px; }
    td span { width: 14px; display: flex; justify-content: center; }
    .current td { background: linear-gradient(#f1f1f1, #f1f1f1) 20px 0 no-repeat; }
    .current td + td { background: #f1f1f1; }
    td + td { padding-left: 6px; }
    .foot { margin-top: auto; display: flex; justify-content: flex-end; }
    .foot i { width: 15px; display: flex; justify-content: center; background: #eee; height: 12px; align-items: center; }
    .strip { display: grid; grid-template-columns: 1fr 114px 75px 1px; height: 20px; background: #eff1f1; }
    .strip i { border-right: 1px solid #d2d4d4; }
  `];

  render() {
    if (this.covered) return html`<div class="panes"></div><div class="strip"><i></i><i></i><i></i></div>`;
    const tool = (n: string, on = false) => html`<button class=${on ? "on" : ""} aria-label=${n}>${toolIcons[n]}</button>`;
    return html`
      <div class="title">${book}Active Directory Users and Computers</div>
      <div class="menu"><span>File</span><span>Action</span><span>View</span><span>Help</span></div>
      <div class="toolbar">${tool("back")}${tool("forward")}<i></i>${tool("up")}${tool("pane", true)}<i></i>${tool("cut")}${tool("paste")}<i></i>${tool("remove")}${tool("props")}${tool("reload")}${tool("exportList")}<i></i>${tool("help")}${tool("action")}<i></i>${tool("newUser")}</div>
      <div class="panes">
        <div class="pane tree">
          <ul>
            <li><span class="node">${book}Active Directory Users and Com</span></li>
            ${treeRows.map(([label, level, kind]) => html`<li class=${"l" + level}>
              <span class="chev">${kind === "selected" ? nothing : kind === "domain" ? chevron("down", "#333", 9) : chevron("right", "#999", 9)}</span>
              <span class=${classMap({ node: true, selected: kind === "selected" })}>${kind === "domain" ? domain : treeFolder(kind === "unit")}${label}</span></li>`)}
          </ul>
          <div class="scroll">${chevron("left", "#444", 8, 1.4)}<b></b>${chevron("right", "#444", 8, 1.4)}</div>
        </div>
        <div class="pane list">
          <table>
            <thead><tr><th>Name</th><th>Type</th></tr></thead>
            <tbody>${accounts.map(([name, type, kind]) => html`<tr class=${kind === "selected" ? "current" : ""}>
              <td><span>${kind === "group" ? groupIcon : userIcon(kind === "off", kind === "selected")}</span>${name}</td><td>${type}</td></tr>`)}</tbody>
          </table>
          <div class="foot"><i>${chevron("down", "#444", 7, 1.6)}</i></div>
        </div>
      </div>
      <div class="strip"><i></i><i></i><i></i></div>`;
  }
}

/* ---------- property dialogs ---------- */

const dialogStyles = css`
  :host { display: flex; flex-direction: column; background: #f0f1f1; color: #1a1a1a; border: 1px solid #2f95e0; font: 9px/12px "Liberation Sans", Arial, sans-serif; white-space: nowrap; }
  .title { display: flex; align-items: center; gap: 8px; height: 26px; padding: 0 16px 2px 7px; background: #fff; color: #111; }
  .spacer { flex: 1; }
  .page { flex: 1; background: #fff; border: 1px solid #dcdcdc; display: flex; flex-direction: column; }
  fieldset { margin: 0; border: 1px solid #dcdcdc; min-width: 0; padding: 0; }
  legend { padding: 0 3px; margin-left: 5px; }
  .tab { background: #f0f1f1; border: 1px solid #dcdcdc; border-width: 1px 1px 0 0; }
  .tab:first-child { border-left-width: 1px; }
  .tab.active { background: #fff; position: relative; margin: -2px 0 -1px; padding-bottom: 3px; z-index: 1; }
  .actions { display: flex; justify-content: flex-end; gap: 6px; padding: 7px 6px 6px; }
  .push { height: 18px; background: #e1e1e1; border: 1px solid #adadad; }
  .actions .push { width: 64px; }
  .push.default { border: 2px solid #0078d7; }
  .push:disabled { background: #cccccc; border-color: #bfbfbf; color: #929292; }
`;

@customElement("user-properties")
class UserProperties extends LitElement {
  static styles = [base, dialogStyles, css`
    .q { font-size: 12px; font-weight: 700; margin-right: 23px; }
    .tabs { display: grid; grid-auto-rows: 1fr; height: 62px; margin: 9px 9px 0 7px; }
    .line { display: flex; }
    .tab { flex: var(--w) 1 0; min-width: 0; }
    .page { margin: 0 8px 0 5px; padding: 9px 19px 0 12px; gap: 8px; }
    fieldset { display: flex; flex-direction: column; gap: 6px; }
    .one { height: 74px; }
    .two { height: 74px; }
    .row { display: grid; grid-template-columns: 75px 1fr; align-items: center; padding: 0 10px; height: 19px; }
    .one .row:first-of-type { margin-top: 6px; }
    .two .row:first-of-type { margin-top: 4px; }
    .row input[type="text"] { width: 100%; height: 19px; min-width: 0; border: 1px solid #858585; background: #fff; padding: 0 1px; outline: 0; }
    .row input.light { border-color: #ccc; }
    .row input.focus { border: 1px solid #0078d7; height: 18px; }
    .radio { display: flex; align-items: center; gap: 2px; }
    .radio input { appearance: none; width: 12px; height: 12px; border: 1px solid #444; border-radius: 50%; background: #fff; }
    .radio input:checked { background: radial-gradient(circle, #333 0 3px, #fff 4px); }
    .connect { display: grid; grid-template-columns: 41px 27px 1fr; align-items: center; }
    .connect > span { text-align: center; }
    .pick { display: grid; align-items: center; background: #e1e1e1; border: 1px solid #b5b5b5; height: 18px; }
    .pick > * { grid-area: 1 / 1; }
    .pick select { appearance: none; border: 0; background: none; padding: 0 3px; width: 100%; outline: 0; }
    .pick svg { justify-self: end; margin-right: 3px; pointer-events: none; }
  `];

  render() {
    const lines: [string, number][][] = [
      [["Published Certificates", 100], ["Member Of", 59], ["Password Replication", 101], ["Dial-in", 39], ["Object", 38]],
      [["Security", 72], ["Environment", 91], ["Sessions", 75], ["Remote control", 99]],
      [["Remote Desktop Services Profile", 174], ["COM+", 65], ["Attribute Editor", 98]],
      [["General", 51], ["Address", 52], ["Account", 53], ["Profile", 47], ["Telephones", 66], ["Organization", 68]],
    ];
    return html`
      <div class="title segoe"><span>Tevin Jones Properties</span><span class="spacer"></span><button class="q" aria-label="Help">?</button><button aria-label="Close">${closeX("#222", 9)}</button></div>
      <div class="tabs" role="tablist">${lines.map((l) => html`<div class="line">${l.map(([t, w]) => html`<button role="tab" class=${classMap({ tab: true, active: t === "Profile" })} style=${"--w:" + w}>${t}</button>`)}</div>`)}</div>
      <div class="page">
        <fieldset class="one"><legend>User profile</legend>
          <div class="row"><label for="pp">Profile path:</label><input id="pp" type="text"></div>
          <div class="row"><label for="ls">Logon script:</label><input id="ls" type="text"></div>
        </fieldset>
        <fieldset class="two"><legend>Home folder</legend>
          <div class="row"><label class="radio"><input type="radio" name="home">Local path:</label><input class="light" type="text" aria-label="Local path"></div>
          <div class="row"><label class="radio"><input type="radio" name="home" checked>Connect:</label>
            <div class="connect"><span class="pick"><select aria-label="Drive"><option>Z:</option></select>${chevron("down", "#555", 9)}</span><span>To:</span><input class="focus" type="text" aria-label="To" .value=${"04M8I2ID63P\\Test\\%username%"}></div>
          </div>
        </fieldset>
      </div>
      <div class="actions"><button class="push default">OK</button><button class="push">Cancel</button><button class="push">Apply</button><button class="push">Help</button></div>`;
  }
}

@customElement("folder-properties")
class FolderProperties extends LitElement {
  static styles = [base, dialogStyles, css`
    .title { padding: 0 9px 3px 9px; height: 27px; }
    .tabs { display: flex; height: 16px; margin: 7px 0 0 6px; }
    .tab { flex: none; padding: 0 5px; }
    .page { margin: 0 7px 0 5px; padding: 10px 9px 0; gap: 10px; }
    fieldset { padding: 0 8px 0 9px; display: flex; flex-direction: column; align-items: flex-start; }
    .share { height: 116px; }
    .who { display: flex; align-items: center; gap: 12px; line-height: 13px; margin: 6px 0 8px; }
    .thumb { width: 28px; height: 28px; background: #eff0f0; display: grid; place-items: center; }
    .net { line-height: 14px; margin-bottom: 6px; }
    .share .push { width: 63px; height: 19px; }
    .adv { height: 80px; }
    .adv p { margin: 5px 0 10px; }
    .adv .push { width: 122px; height: 19px; gap: 1px; }
  `];

  render() {
    return html`
      <div class="title segoe">${openFolder(8, 12)}<span>Tjones Properties</span><span class="spacer"></span><button aria-label="Close">${closeX("#222", 9)}</button></div>
      <div class="tabs" role="tablist">${["General", "Sharing", "Security", "Previous Versions", "Customize"].map((t) => html`<button role="tab" class=${classMap({ tab: true, active: t === "Sharing" })}>${t}</button>`)}</div>
      <div class="page">
        <fieldset class="share"><legend>Network File and Folder Sharing</legend>
          <div class="who"><span class="thumb">${openFolder(18, 24)}</span><span>Tjones<br>Shared</span></div>
          <p class="net">Network Path:<br>\\\\WIN-04M8I2ID63P\\Test\\Tjones</p>
          <button class="push default">Share...</button>
        </fieldset>
        <fieldset class="adv"><legend>Advanced Sharing</legend>
          <p>Set custom permissions, create multiple shares, and set other<br>advanced sharing options.</p>
          <button class="push">${shield}Advanced Sharing...</button>
        </fieldset>
      </div>
      <div class="actions"><button class="push">OK</button><button class="push">Cancel</button><button class="push" disabled>Apply</button></div>`;
  }
}

/* ---------- page ---------- */

@customElement("app-root")
class AppRoot extends LitElement {
  static styles = [base, css`
    :host { display: block; min-height: 100vh; background: #fff; color: #000; font-family: "Liberation Sans", Arial, sans-serif; }
    header { padding: 8px 24px 33px 24%; }
    h1 { max-width: 830px; font-size: 30px; line-height: 32px; }
    main { display: grid; grid-template-columns: 869fr 739fr; gap: 54px; padding: 0 32px 0 38px; align-items: start; }
    .first vm-frame { margin: 0 138px 5px 28px; }
    .second vm-frame { margin: 0 36px 5px 1px; }
    .caption { font-size: 24px; line-height: 29px; }
    .first .caption { padding-right: 10px; }
    .window { position: absolute; }
    explorer-window { left: 5px; top: 93px; right: 6px; bottom: 82px; }
    directory-window { left: 19px; top: 163px; right: 48px; bottom: 66px; }
    user-properties { left: 312px; top: 111px; right: 22px; bottom: 95px; }
    folder-properties { left: 302px; top: 178px; right: 74px; bottom: 93px; }
    .marker { height: 21px; margin-top: 255px; background: #d9d9d9; }
  `];

  render() {
    return html`
      <header><h1>How to map share drive automatically when logging into the server using active directory</h1></header>
      <main>
        <section class="first">
          <vm-frame time="15:01" active="directory">
            <explorer-window class="window" covered .path=${["This PC", "Local Disk (C:)"]}><li slot="side" class="marker"></li></explorer-window>
            <directory-window class="window"></directory-window>
            <user-properties class="window"></user-properties>
          </vm-frame>
          <p class="caption">Right click on user properties&gt;profile select Connect paste share file path at the end of the address path type backslash \\ percent sign % username percent sign% this as to be done to create the folder location.</p>
        </section>
        <section class="second">
          <vm-frame time="15:10" active="folder" inactive>
            <directory-window class="window" covered></directory-window>
            <explorer-window class="window" .path=${["This PC", "Local Disk (C:)", "Test"]}></explorer-window>
            <folder-properties class="window"></folder-properties>
          </vm-frame>
          <p class="caption">Back on file explorer Local disk&gt; Test (folder)&gt; Tjones (folder)&gt; right click properties sharing tab and that is the correct network path address, so when this user logs in their folder is automatically there.</p>
        </section>
      </main>`;
  }
}
